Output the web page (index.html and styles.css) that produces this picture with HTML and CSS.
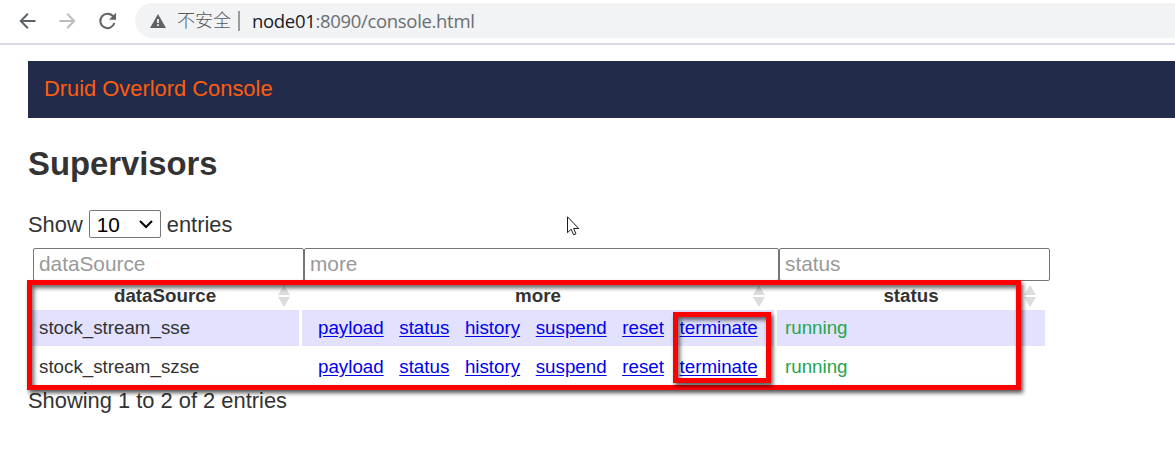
FILE: index.html
```html
<!DOCTYPE html>
<html lang="en">
<head>
<meta charset="utf-8">
<title>Druid Overlord Console</title>
<link rel="stylesheet" href="styles.css">
</head>
<body>
<header class="toolbar">
  <svg class="nav-icon" width="18" height="18" viewBox="0 0 18 18"><path d="M17.5 9H3M9.8 1.8L2.8 9l7 7.2" fill="none" stroke="#5f6368" stroke-width="2"/></svg>
  <svg class="nav-icon" width="18" height="18" viewBox="0 0 18 18"><path d="M1.5 9H16M9.2 1.8l7 7.2-7 7.2" fill="none" stroke="#bbbdbf" stroke-width="2"/></svg>
  <svg class="nav-icon" width="18" height="18" viewBox="0 0 18 18"><path d="M15.2 4.5A7.2 7.2 0 1 0 16.4 11" fill="none" stroke="#5f6368" stroke-width="2"/><path d="M18 .8v7h-7z" fill="#5f6368"/></svg>
  <div class="omnibox">
    <svg class="warning" width="16" height="14" viewBox="0 0 16 14"><path d="M8 0l8 14H0z" fill="#5f6368"/><path d="M8 5v4M8 10.3v1.8" stroke="#f1f3f4" stroke-width="1.8"/></svg>
    <span class="insecure">不安全</span>
    <span class="divider"></span>
    <span class="url"><span class="host">node01</span>:8090/console.html</span>
  </div>
</header>
<main class="page">
  <nav class="brand-bar">Druid Overlord Console</nav>
  <h1 class="title">Supervisors</h1>
  <div class="length">
    <span>Show</span>
    <span class="select">10<svg width="14" height="9" viewBox="0 0 14 9"><path d="M1 1l6 6 6-6" fill="none" stroke="#000" stroke-width="2"/></svg></span>
    <span>entries</span>
  </div>
  <section class="table">
    <div class="filters">
      <div class="filter">dataSource</div>
      <div class="filter">more</div>
      <div class="filter">status</div>
    </div>
    <div class="row head">
      <div class="cell">dataSource<svg class="sort" width="12" height="22" viewBox="0 0 12 22"><path d="M6 0l6 10H0zM0 12h12L6 22z" fill="#dcdcdc"/></svg></div>
      <div class="cell">more<svg class="sort" width="12" height="22" viewBox="0 0 12 22"><path d="M6 0l6 10H0zM0 12h12L6 22z" fill="#dcdcdc"/></svg></div>
      <div class="cell">status<svg class="sort" width="12" height="22" viewBox="0 0 12 22"><path d="M6 0l6 10H0zM0 12h12L6 22z" fill="#dcdcdc"/></svg></div>
    </div>
    <div class="row odd">
      <div class="cell">stock_stream_sse</div>
      <div class="cell links"><a href="#">payload</a><a href="#">status</a><a href="#">history</a><a href="#">suspend</a><a href="#">reset</a><a href="#">terminate</a></div>
      <div class="cell running">running</div>
    </div>
    <div class="row">
      <div class="cell">stock_stream_szse</div>
      <div class="cell links"><a href="#">payload</a><a href="#">status</a><a href="#">history</a><a href="#">suspend</a><a href="#">reset</a><a href="#">terminate</a></div>
      <div class="cell running">running</div>
    </div>
  </section>
  <div class="info">Showing 1 to 2 of 2 entries</div>
</main>
<div class="mark mark-table"></div>
<div class="mark mark-terminate"></div>
<svg class="cursor" width="13" height="20" viewBox="0 0 13 20"><path d="M.5 .8v15.9l3.6-3.5 2.5 5.6 2.4-1-2.4-5.3h5.1z" fill="#fff" stroke="#1b1b28" stroke-width="1"/></svg>
</body>
</html>
```
FILE: styles.css
```css
* { box-sizing: border-box; }

body {
  margin: 0;
  width: 1175px;
  height: 455px;
  overflow: hidden;
  background: #fff;
  color: #333;
  font-family: "Liberation Sans", Arial, sans-serif;
  font-size: 21.88px;
}

.toolbar {
  display: flex;
  align-items: flex-start;
  height: 45px;
  padding: 3px 0 0 18px;
  border-bottom: 2px solid #dadbe0;
}

.nav-icon { flex: none; margin: 9px 22px 0 0; }
.nav-icon:nth-child(3) { margin-right: 19px; }

.omnibox {
  display: flex;
  align-items: center;
  flex: 1;
  height: 35px;
  padding-left: 15px;
  border-radius: 18px 0 0 18px;
  background: #f1f3f4;
  color: #6b6e72;
  font-family: "Open Sans", "Noto Sans CJK SC", sans-serif;
  font-size: 18.5px;
  letter-spacing: -.32px;
  line-height: 34px;
  white-space: nowrap;
}

.insecure {
  width: 54px;
  height: 35px;
  margin-left: 11px;
  font-family: "Noto Sans CJK SC", sans-serif;
  font-size: 18px;
  font-weight: 300;
  letter-spacing: 0;
  line-height: 33px;
  color: #55585c;
}

.divider { width: 2px; height: 20px; margin: 0 12px 0 7px; background: #999c9f; }
.host { color: #202124; }

.page { padding: 16px 0 0 28px; }

.brand-bar {
  height: 57px;
  padding-left: 16px;
  background: #222b4a;
  color: #ff5c10;
  line-height: 55px;
}

.title {
  margin: 26px 0 0;
  font-size: 32.8px;
  line-height: 40px;
}

.length {
  display: flex;
  align-items: center;
  gap: 6px;
  height: 28px;
  margin-top: 26px;
  line-height: 28px;
}

.length > span:not(.select) { padding-top: 1px; }

.select {
  display: flex;
  align-items: center;
  justify-content: space-between;
  width: 72px;
  height: 28px;
  padding: 1px 7px 0;
  border: 1px solid #767676;
  border-radius: 2px;
  color: #000;
  font-size: 20.8px;
}

.table { font-size: 18.75px; }

.filters { display: flex; margin: 10px 0 0 5px; }

.filter {
  width: 271px;
  height: 33px;
  padding-left: 5px;
  border: 1px solid #767676;
  border-radius: 2px;
  color: #999;
  font-size: 20.8px;
  line-height: 30px;
}

.filter:nth-child(2) { width: 475px; }

.row {
  display: grid;
  grid-template-columns: 268px 472px 268px;
  gap: 3px;
  height: 36px;
  margin: 3px 0 0 3px;
  line-height: 36px;
}

.cell { padding-left: 8px; white-space: pre; }

.head {
  height: 29px;
  margin-top: 0;
  font-weight: bold;
  line-height: 29px;
  text-align: center;
}

.head .cell { position: relative; padding: 0; }
.sort { position: absolute; right: 9px; top: 4px; }

.head + .row { margin-top: 0; }
.odd .cell { background: #e2e2ff; }

.links { display: flex; gap: 15.6px; padding-left: 16px; }
.links a { color: #00e; text-underline-offset: 2px; }
.running { color: #22a650; }

.info { margin-top: 2px; line-height: 28px; }

.mark {
  position: absolute;
  border: 5px solid #f00;
  box-shadow: 2px 3px 4px rgba(0, 0, 0, .65), inset 2px 3px 4px rgba(0, 0, 0, .6);
}

.mark-table { left: 27px; top: 280px; width: 994px; height: 110px; }
.mark-terminate { left: 673px; top: 312px; width: 98px; height: 71px; }
.cursor { position: absolute; left: 567px; top: 216px; }
```
